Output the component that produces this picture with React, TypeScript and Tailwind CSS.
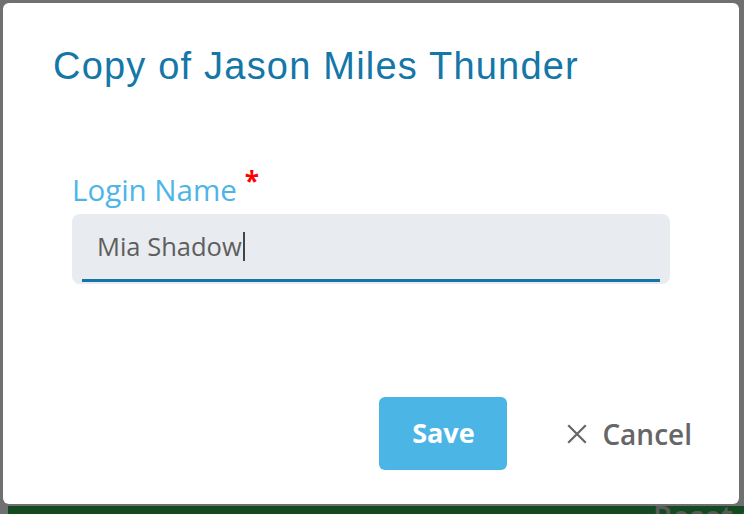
import React, { useState } from 'react';

const CloseIcon = () => (
  <svg width="20" height="20" viewBox="0 0 20 20" fill="none" stroke="#666666" strokeWidth="2.2" strokeLinecap="square">
    <path d="M2 2L18 18M18 2L2 18" />
  </svg>
);

const CopyUserDialog: React.FC = () => {
  const [loginName, setLoginName] = useState('Mia Shadow');

  return (
    <div className="absolute left-[3px] top-[3px] w-[736px] h-[501px] bg-white rounded-[6px] flex flex-col">
      <h2 className="pl-[50px] pt-[44px] text-[38px] leading-none tracking-[1.2px] text-[#1576a8] font-['Liberation_Sans',Arial,sans-serif]">
        Copy of Jason Miles Thunder
      </h2>

      <div className="mt-[90px] mx-[69px] flex flex-col font-['Open_Sans',sans-serif]">
        <label className="flex items-start text-[29.5px] leading-none text-[#4db6e6]">
          Login Name
          <span className="ml-[8px] -mt-[7px] text-[26px] font-bold text-[#ff0000]">*</span>
        </label>
        <div className="mt-[9px] h-[70px] bg-[#e8ebef] rounded-[8px] flex flex-col">
          <div className="flex-1 flex items-center pl-[25px] pt-[1px]">
            <span className="text-[25.5px] text-[#5e5e5e] leading-none">{loginName}</span>
            <span className="w-[2px] h-[29px] bg-[#444444] ml-[1px]" />
          </div>
          <div className="mx-[10px] mb-[2px] h-[3px] bg-[#1873a8]" />
        </div>
        <input className="hidden" value={loginName} onChange={e => setLoginName(e.target.value)} />
      </div>

      <div className="mt-auto mb-[34px] mr-[47px] flex items-center justify-end font-['Open_Sans',sans-serif]">
        <button className="w-[128px] h-[73px] bg-[#4bb6e6] rounded-[6px] text-white text-[27px] font-bold">
          Save
        </button>
        <button className="ml-[60px] flex items-center gap-[15px] text-[28px] font-semibold text-[#666666]">
          <CloseIcon />
          Cancel
        </button>
      </div>
    </div>
  );
};

export default function App() {
  return (
    <div className="relative w-[744px] h-[514px] bg-[#707070] overflow-hidden">
      <div className="h-full flex flex-col">
        <div className="flex-1" />
        <div className="ml-[8px] h-[8px] bg-[#144a22] flex overflow-visible">
          <span className="ml-[645px] -mt-[4px] text-[30px] leading-none font-semibold text-[#5a5a5a] font-['Open_Sans',sans-serif] whitespace-nowrap">
            Reset C
          </span>
        </div>
      </div>
      <CopyUserDialog />
    </div>
  );
}
